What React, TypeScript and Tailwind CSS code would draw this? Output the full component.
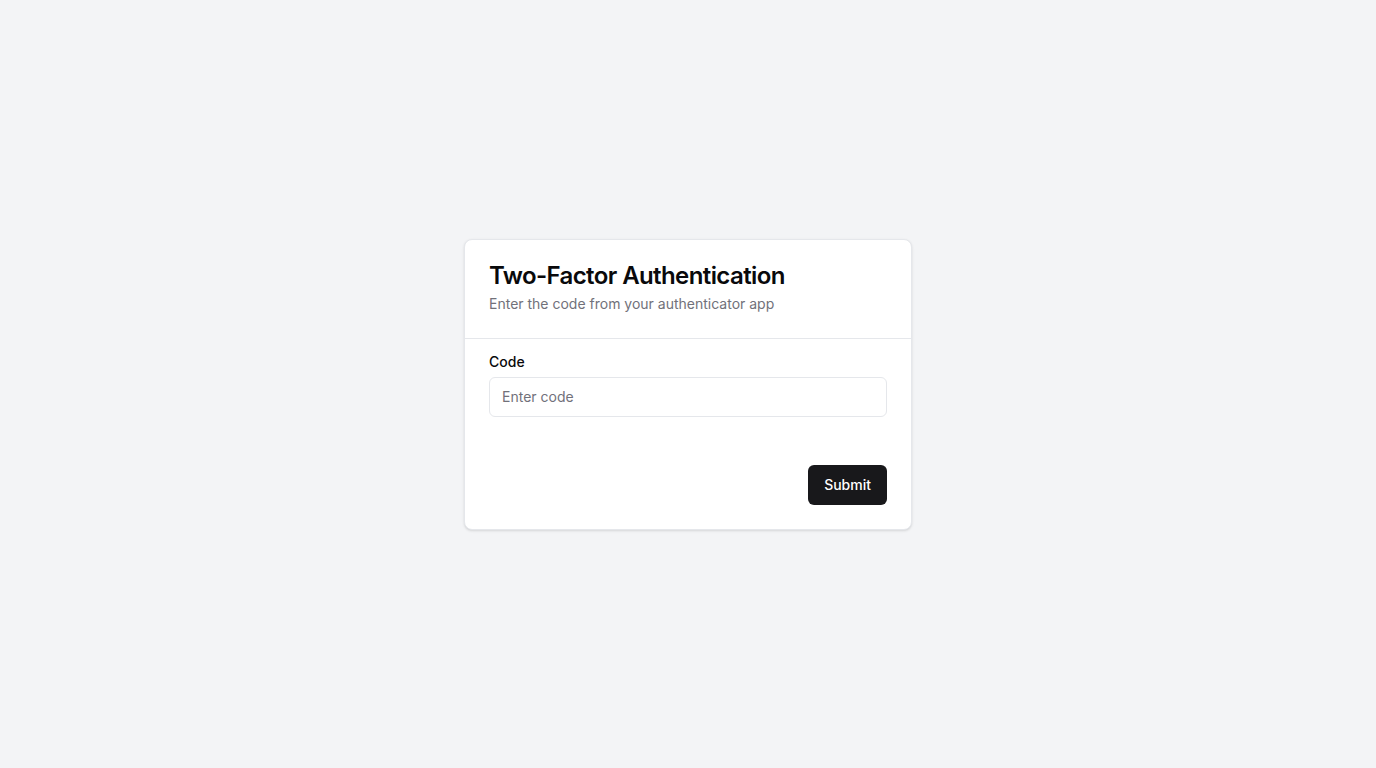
import React from "react";

export default function App() {
  return (
    <div
      className="min-h-screen w-full bg-[#f3f4f6] flex items-center justify-center"
      style={{ fontFamily: "Inter, 'Noto Sans', sans-serif" }}
    >
      <div className="w-full max-w-md bg-white rounded-lg border border-gray-200 shadow-sm">
        <div className="p-6 flex flex-col gap-1.5 border-b border-gray-200">
          <h1 className="text-2xl font-semibold leading-none tracking-tight text-[#09090b]">
            Two-Factor Authentication
          </h1>
          <p className="text-sm text-[#71717a] leading-5">Enter the code from your authenticator app</p>
        </div>
        <div className="px-6 pt-4 pb-6 flex flex-col gap-2">
          <label className="text-sm font-medium leading-none text-[#09090b]">Code</label>
          <input
            className="h-10 w-full rounded-md border border-gray-200 bg-white px-3 text-sm text-[#09090b] placeholder:text-[#71717a] outline-none"
            placeholder="Enter code"
          />
        </div>
        <div className="p-6 flex justify-end">
          <button className="h-10 px-4 rounded-md bg-[#18181b] text-white text-sm font-medium">
            Submit
          </button>
        </div>
      </div>
    </div>
  );
}
